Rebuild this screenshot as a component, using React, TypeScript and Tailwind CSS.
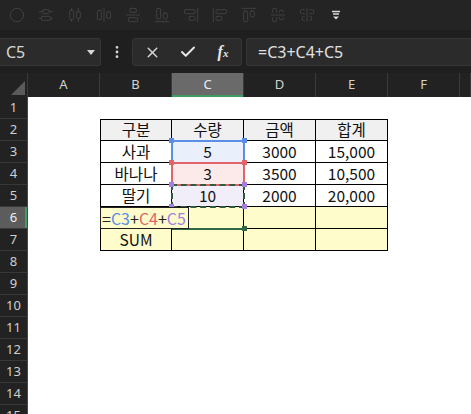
import {
  Circle,
  AlignVerticalDistributeCenter,
  AlignHorizontalDistributeCenter,
  AlignHorizontalJustifyCenter,
  AlignVerticalJustifyCenter,
  AlignEndHorizontal,
  AlignEndVertical,
  AlignStartVertical,
  AlignStartHorizontal,
  AlignCenterHorizontal,
  AlignCenterVertical,
  X,
  Check,
  EllipsisVertical,
} from 'lucide-react';

const COLS = ['A', 'B', 'C', 'D', 'E', 'F', ''];
const WIDTHS = ['w-[72px]', 'w-[72px]', 'w-[72px]', 'w-[72px]', 'w-[72px]', 'w-[72px]', 'w-[11px]'];

type Cell = { text?: string; bg?: string };

// table body: rows 2..7, columns B..E
const TABLE: Record<number, Cell[]> = {
  2: [
    { text: '구분', bg: 'bg-[#f0f0f0]' },
    { text: '수량', bg: 'bg-[#f0f0f0]' },
    { text: '금액', bg: 'bg-[#f0f0f0]' },
    { text: '합계', bg: 'bg-[#f0f0f0]' },
  ],
  3: [{ text: '사과' }, { text: '5', bg: 'bg-[#e9f0fc]' }, { text: '3000' }, { text: '15,000' }],
  4: [{ text: '바나나' }, { text: '3', bg: 'bg-[#fce9ea]' }, { text: '3500' }, { text: '10,500' }],
  5: [{ text: '딸기' }, { text: '10', bg: 'bg-[#f1edf9]' }, { text: '2000' }, { text: '20,000' }],
  6: [{ bg: 'bg-[#fefccb]' }, { bg: 'bg-[#fefccb]' }, { bg: 'bg-[#fefccb]' }, { bg: 'bg-[#fefccb]' }],
  7: [{ text: 'SUM', bg: 'bg-[#fefccb]' }, { bg: 'bg-[#fefccb]' }, { bg: 'bg-[#fefccb]' }, { bg: 'bg-[#fefccb]' }],
};

const TOOL_ICONS = [
  Circle,
  AlignVerticalDistributeCenter,
  AlignHorizontalDistributeCenter,
  AlignHorizontalJustifyCenter,
  AlignVerticalJustifyCenter,
  AlignEndHorizontal,
  AlignEndVertical,
  AlignStartVertical,
  AlignStartHorizontal,
  AlignCenterHorizontal,
  AlignCenterVertical,
];

function Toolbar() {
  return (
    <div className="flex h-[30px] items-center bg-[#242424] pl-[2px]">
      {TOOL_ICONS.map((Icon, i) => (
        <div key={i} className="flex w-[29px] items-center justify-center">
          <Icon size={16} strokeWidth={1.2} className="text-[#474747]" />
        </div>
      ))}
      <div className="flex w-[29px] items-center justify-center">
        <svg width="12" height="12" viewBox="0 0 12 12" fill="none">
          <path d="M2 2.5h8M3 5h6" stroke="#d8d8d8" strokeWidth="1.3" />
          <path d="M3 7.5h6L6 10.5z" fill="#d8d8d8" />
        </svg>
      </div>
    </div>
  );
}

function FormulaBar() {
  return (
    <div className="flex h-[28px] items-stretch font-['Noto_Sans',sans-serif]">
      <div className="flex w-[101px] items-center justify-between rounded-r-[3px] border border-l-0 border-[#363636] bg-[#2b2b2b] pl-[6px] pr-[5px]">
        <span className="text-[16px] leading-none text-[#d6d6d6]">C5</span>
        <svg width="8" height="5" viewBox="0 0 8 5">
          <path d="M0 0h8L4 5z" fill="#d6d6d6" />
        </svg>
      </div>
      <div className="flex w-[31px] items-center justify-center">
        <EllipsisVertical size={16} strokeWidth={2.2} className="text-[#d6d6d6]" />
      </div>
      <div className="flex w-[110px] items-center rounded-[3px] border border-[#363636] bg-[#2b2b2b]">
        <div className="flex w-[38px] justify-center">
          <X size={17} strokeWidth={2} className="text-[#d6d6d6]" />
        </div>
        <div className="flex w-[34px] justify-center">
          <Check size={18} strokeWidth={2.6} className="text-[#e6e6e6]" />
        </div>
        <div className="flex w-[36px] justify-center">
          <span className="font-['Liberation_Serif',serif] text-[16px] italic font-bold leading-none text-[#e6e6e6]">
            f<span className="text-[11px]">x</span>
          </span>
        </div>
      </div>
      <div className="ml-[4px] flex flex-1 items-center rounded-l-[3px] border border-r-0 border-[#363636] bg-[#2b2b2b] pl-[11px]">
        <span className="text-[16px] leading-none text-[#e0e0e0]">=C3+C4+C5</span>
      </div>
    </div>
  );
}

function ColumnHeader() {
  return (
    <div className="flex h-[24px] bg-[#222222] font-['Noto_Sans',sans-serif]">
      <div className="relative w-[28px] border-r border-[#3a3a3a]">
        <svg className="absolute bottom-[2px] right-[2px]" width="14" height="14" viewBox="0 0 14 14">
          <path d="M14 0v14H0z" fill="#5a5a5a" />
        </svg>
      </div>
      {COLS.map((c, i) => (
        <div
          key={i}
          className={`${WIDTHS[i]} flex items-center justify-center border-r text-[13px] ${
            c === 'C'
              ? 'border-[#3a3a3a] bg-[#6a6a6a] text-[#eeeeee] shadow-[inset_0_-2px_0_#3e9b61]'
              : 'border-[#3a3a3a] text-[#d2d2d2]'
          }`}
        >
          {c}
        </div>
      ))}
    </div>
  );
}

function SheetRow({ r }: { r: number }) {
  const table = TABLE[r];
  return (
    <div className="flex h-[22px]">
      <div
        className={`flex w-[28px] items-center justify-center border-b font-['Noto_Sans',sans-serif] text-[13px] ${
          r === 6
            ? 'border-[#3a3a3a] bg-[#5c5c5c] text-[#f0f0f0] shadow-[inset_-2px_0_0_#3e9b61]'
            : 'border-[#383838] bg-[#222222] text-[#cfcfcf]'
        } border-r border-r-[#4a4a4a]`}
      >
        {r}
      </div>
      {COLS.map((_, i) => {
        const inTable = !!table && i >= 1 && i <= 4;
        const cell = inTable ? table[i - 1] : undefined;
        const bg = inTable ? cell?.bg ?? 'bg-white' : 'bg-white';
        return (
          <div
            key={i}
            className={`${WIDTHS[i]} ${bg} flex items-center justify-center text-[15.5px] leading-none text-[#111111] ${
              inTable ? 'border-b border-r border-black' : ''
            } ${inTable && i === 1 ? 'border-l' : ''} ${inTable && r === 2 ? 'border-t' : ''}`}
          >
            {cell?.text}
          </div>
        );
      })}
    </div>
  );
}

function Corner({ color, cls }: { color: string; cls: string }) {
  return <div className={`absolute h-[5px] w-[5px] ${cls}`} style={{ backgroundColor: color }} />;
}

function Overlays() {
  return (
    <>
      {/* C3 blue reference */}
      <div className="absolute left-[171px] top-[43px] h-[24px] w-[74px] border-2 border-[#5b8ee6]" />
      <Corner color="#5b8ee6" cls="left-[169px] top-[41px]" />
      <Corner color="#5b8ee6" cls="left-[242px] top-[41px]" />
      {/* C4 red reference */}
      <div className="absolute left-[171px] top-[65px] h-[24px] w-[74px] border-2 border-[#e2646b]" />
      <Corner color="#e2646b" cls="left-[169px] top-[63px]" />
      <Corner color="#e2646b" cls="left-[242px] top-[63px]" />
      {/* C5 marquee */}
      <div className="absolute left-[171px] top-[87px] h-[24px] w-[74px] border-2 border-dashed border-[#2f5b40]" />
      <Corner color="#a57ee0" cls="left-[169px] top-[85px]" />
      <Corner color="#a57ee0" cls="left-[242px] top-[85px]" />
      <Corner color="#a57ee0" cls="left-[169px] top-[107px]" />
      <Corner color="#a57ee0" cls="left-[242px] top-[107px]" />
      {/* active cell C6 */}
      <div className="absolute left-[172px] top-[131px] h-[2px] w-[73px] bg-[#2e6a45]" />
      <Corner color="#2e6a45" cls="left-[242px] top-[129px]" />
      {/* in-cell editor */}
      <div className="absolute left-[100px] top-[110px] flex h-[22px] w-[89px] items-center border border-[#222222] bg-[#fefccb] pl-[1px] text-[16px] leading-none">
        <span className="text-[#222]">=</span>
        <span className="text-[#5b8ee6]">C3</span>
        <span className="text-[#222]">+</span>
        <span className="text-[#e2646b]">C4</span>
        <span className="text-[#222]">+</span>
        <span className="text-[#a57ee0]">C5</span>
      </div>
    </>
  );
}

export default function App() {
  const rows = Array.from({ length: 15 }, (_, i) => i + 1);
  return (
    <div className="h-[414px] w-[471px] overflow-hidden bg-[#1f1f1f]">
      <Toolbar />
      <div className="h-[8px]" />
      <FormulaBar />
      <div className="h-[7px]" />
      <ColumnHeader />
      <div className="relative font-['Noto_Sans_CJK_KR',sans-serif]">
        {rows.map((r) => (
          <SheetRow key={r} r={r} />
        ))}
        <Overlays />
      </div>
    </div>
  );
}
